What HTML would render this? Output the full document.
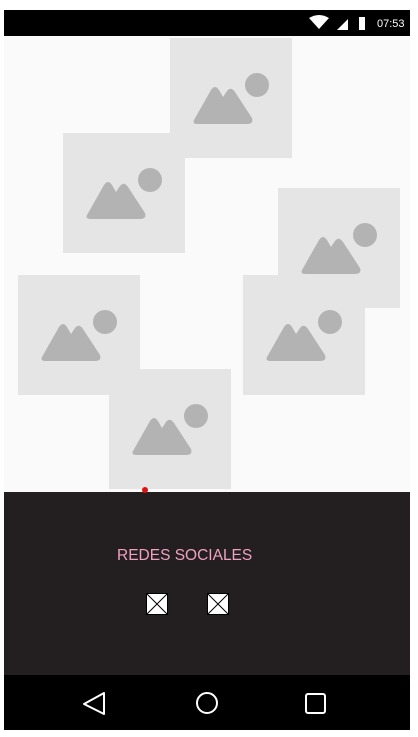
<!DOCTYPE html>
<html><head><style>
body{margin:0;width:418px;height:737px;background:#fff;position:relative;overflow:hidden;font-family:"Liberation Sans",sans-serif}
.scr{position:absolute;left:4px;top:10px;width:406px;height:720px;background:#fafafa}
.sb{position:absolute;left:4px;top:10px;width:406px;height:26px;background:#000;color:#fff;font-size:11px}
.img{position:absolute;width:122px;height:120px;background:#e5e5e5}
.img svg{position:absolute;left:0;top:0}
.foot{position:absolute;left:4px;top:492px;width:406px;height:183px;background:#231f20}
.nav{position:absolute;left:4px;top:675px;width:406px;height:55px;background:#000}
.x{position:absolute;width:22px;height:22px;background:#fff;border:1px solid #000;box-sizing:border-box}
</style></head><body>
<div class="scr"></div>
<div class="sb">
<svg width="406" height="26" style="position:absolute;left:0;top:0">
<path d="M305 8 Q315 2 325 8 L315 19 Z" fill="#fff"/>
<path d="M344 9 L344 20 L333 20 Z" fill="#fff"/>
<rect x="355" y="7" width="6" height="13" fill="#fff"/>
<text x="373" y="17" fill="#fff" font-size="11" font-family="Liberation Sans">07:53</text>
</svg></div>

<div class="img" style="left:170px;top:38px"><svg width="122" height="120"><circle cx="87" cy="47" r="12" fill="#b3b3b3"/><path d="M24 82 L41 52 Q45 46 49 52 L53 59 L57 53 Q61 48 65 54 L82 80 Q84 86 77 86 L28 86 Q22 86 24 82Z" fill="#b3b3b3"/></svg></div>
<div class="img" style="left:63px;top:133px"><svg width="122" height="120"><circle cx="87" cy="47" r="12" fill="#b3b3b3"/><path d="M24 82 L41 52 Q45 46 49 52 L53 59 L57 53 Q61 48 65 54 L82 80 Q84 86 77 86 L28 86 Q22 86 24 82Z" fill="#b3b3b3"/></svg></div>
<div class="img" style="left:278px;top:188px"><svg width="122" height="120"><circle cx="87" cy="47" r="12" fill="#b3b3b3"/><path d="M24 82 L41 52 Q45 46 49 52 L53 59 L57 53 Q61 48 65 54 L82 80 Q84 86 77 86 L28 86 Q22 86 24 82Z" fill="#b3b3b3"/></svg></div>
<div class="img" style="left:18px;top:275px"><svg width="122" height="120"><circle cx="87" cy="47" r="12" fill="#b3b3b3"/><path d="M24 82 L41 52 Q45 46 49 52 L53 59 L57 53 Q61 48 65 54 L82 80 Q84 86 77 86 L28 86 Q22 86 24 82Z" fill="#b3b3b3"/></svg></div>
<div class="img" style="left:243px;top:275px"><svg width="122" height="120"><circle cx="87" cy="47" r="12" fill="#b3b3b3"/><path d="M24 82 L41 52 Q45 46 49 52 L53 59 L57 53 Q61 48 65 54 L82 80 Q84 86 77 86 L28 86 Q22 86 24 82Z" fill="#b3b3b3"/></svg></div>
<div class="img" style="left:109px;top:369px"><svg width="122" height="120"><circle cx="87" cy="47" r="12" fill="#b3b3b3"/><path d="M24 82 L41 52 Q45 46 49 52 L53 59 L57 53 Q61 48 65 54 L82 80 Q84 86 77 86 L28 86 Q22 86 24 82Z" fill="#b3b3b3"/></svg></div>

<div class="foot">
<div style="position:absolute;left:113px;top:55px;color:#f0a0c0;font-size:15.5px">REDES SOCIALES</div>
<div class="x" style="left:142px;top:101px"><svg width="20" height="20"><path d="M0 0L20 20M20 0L0 20" stroke="#000" stroke-width="1"/></svg></div>
<div class="x" style="left:203px;top:101px"><svg width="20" height="20"><path d="M0 0L20 20M20 0L0 20" stroke="#000" stroke-width="1"/></svg></div>
</div>
<div style="position:absolute;left:142px;top:487px;width:6px;height:6px;border-radius:50%;background:#e01010"></div>
<div class="nav"><svg width="406" height="55">
<path d="M100 18 L100 39 L80 29 Z" fill="none" stroke="#fff" stroke-width="2" stroke-linejoin="round"/>
<circle cx="203" cy="28" r="10" fill="none" stroke="#fff" stroke-width="2"/>
<rect x="302" y="19" width="19" height="19" rx="2" fill="none" stroke="#fff" stroke-width="2"/>
</svg></div>
</body></html>
